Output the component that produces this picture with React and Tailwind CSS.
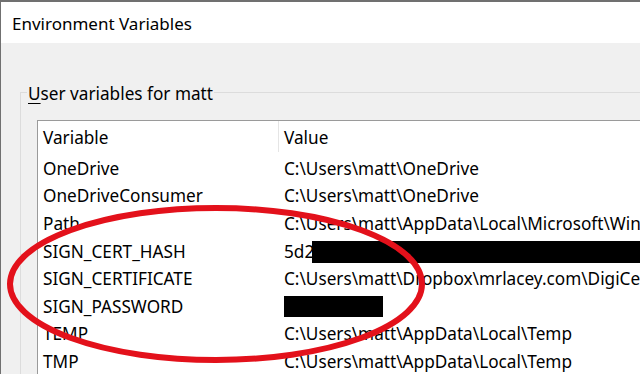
import React from 'react';

const rows = [
  { name: 'OneDrive', value: 'C:\\Users\\matt\\OneDrive' },
  { name: 'OneDriveConsumer', value: 'C:\\Users\\matt\\OneDrive' },
  { name: 'Path', value: 'C:\\Users\\matt\\AppData\\Local\\Microsoft\\WindowsApps;' },
  { name: 'SIGN_CERT_HASH', value: 'hash' },
  { name: 'SIGN_CERTIFICATE', value: 'C:\\Users\\matt\\Dropbox\\mrlacey.com\\DigiCert.pfx' },
  { name: 'SIGN_PASSWORD', value: 'password' },
  { name: 'TEMP', value: 'C:\\Users\\matt\\AppData\\Local\\Temp' },
  { name: 'TMP', value: 'C:\\Users\\matt\\AppData\\Local\\Temp' },
];

const ValueCell = ({ row }) => {
  if (row.value === 'hash') {
    return (
      <div className="flex items-center">
        <span>5d2</span>
        <div className="-ml-[2px] h-[22px] w-[340px] bg-black" />
      </div>
    );
  }
  if (row.value === 'password') {
    return <div className="h-[21px] w-[99px] bg-black" />;
  }
  return <span>{row.value}</span>;
};

const App = () => {
  return (
    <div
      className="relative w-[640px] h-[374px] overflow-hidden bg-[#f0f0f0] border-t-2 border-l border-[#707070] text-black"
      style={{ fontFamily: '"Noto Sans", "Liberation Sans", sans-serif' }}
    >
      {/* title bar */}
      <div className="h-[41px] bg-white flex items-center pl-[11px] text-[17px]">
        <span className="relative top-[1px]">Environment Variables</span>
      </div>

      {/* group box */}
      <fieldset className="ml-[19px] mt-[38px] w-[700px] border-t border-l border-[#dcdcdc] pb-10">
        <legend className="ml-[6px] px-[1px] text-[17.2px] leading-[22px]">
          <span className="relative top-[2px]">
            <span className="underline underline-offset-[3px]">U</span>ser variables for matt
          </span>
        </legend>

        <div className="ml-[16px] mt-[17px] bg-white border border-[#9a9a9a] text-[17.2px] whitespace-nowrap">
          <div className="flex h-[34px] items-center">
            <div className="w-[240px] pl-[5px]">Variable</div>
            <div className="h-[31px] w-px bg-[#e5e5e5] self-start" />
            <div className="pl-[5px]">Value</div>
          </div>
          {rows.map((row) => (
            <div key={row.name} className="flex h-[27.6px] items-center">
              <div className="w-[240px] pl-[5px]">{row.name}</div>
              <div className="pl-[6px]">
                <ValueCell row={row} />
              </div>
            </div>
          ))}
        </div>
      </fieldset>

      {/* red hand-drawn ellipse over the list */}
      <svg className="absolute left-0 top-0 pointer-events-none" width="640" height="374" viewBox="0 0 640 374">
        <ellipse cx="215" cy="282" rx="206" ry="76" fill="none" stroke="#e3111b" strokeWidth="6" />
      </svg>
    </div>
  );
};

export default App;
